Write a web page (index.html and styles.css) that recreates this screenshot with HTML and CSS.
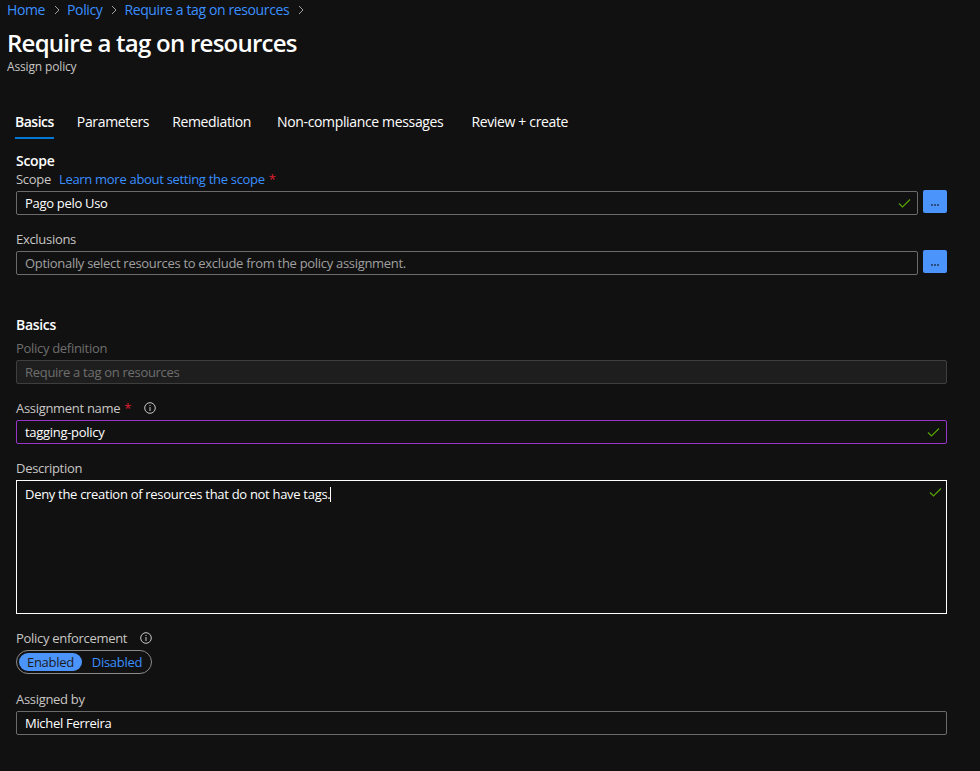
FILE: index.html
```
<!DOCTYPE html>
<html>
<head>
<meta charset="utf-8">
<link rel="stylesheet" href="styles.css">
</head>
<body>
<div class="header">
  <nav class="crumbs">
    <a>Home</a><svg class="sep" viewBox="0 0 6 10" width="6" height="10"><path d="M1 1 L5 5 L1 9" fill="none" stroke="#a0a0a0" stroke-width="1"/></svg><a>Policy</a><svg class="sep" viewBox="0 0 6 10" width="6" height="10"><path d="M1 1 L5 5 L1 9" fill="none" stroke="#a0a0a0" stroke-width="1"/></svg><a>Require a tag on resources</a><svg class="sep" viewBox="0 0 6 10" width="6" height="10"><path d="M1 1 L5 5 L1 9" fill="none" stroke="#a0a0a0" stroke-width="1"/></svg>
  </nav>
  <h1 class="title">Require a tag on resources</h1>
  <div class="subtitle">Assign policy</div>
</div>
<div class="tabs">
  <div class="tab active">Basics</div>
  <div class="tab">Parameters</div>
  <div class="tab">Remediation</div>
  <div class="tab wide">Non-compliance messages</div>
  <div class="tab wider">Review + create</div>
</div>
<form class="form">
  <h2 class="section">Scope</h2>
  <div class="field first">
    <div class="label">Scope <a class="link">Learn more about setting the scope</a> <span class="req">*</span></div>
    <div class="row">
      <div class="input">Pago pelo Uso<svg class="check" viewBox="0 0 12 9" width="13" height="9"><path d="M0.5 4.5 L4 8 L11.5 0.5" fill="none" stroke="#57a300" stroke-width="1.2"/></svg></div>
      <div class="dots"><i></i><i></i><i></i></div>
    </div>
  </div>
  <div class="field">
    <div class="label">Exclusions</div>
    <div class="row">
      <div class="input placeholder">Optionally select resources to exclude from the policy assignment.</div>
      <div class="dots"><i></i><i></i><i></i></div>
    </div>
  </div>

  <h2 class="section second">Basics</h2>
  <div class="field first lower">
    <div class="label disabled">Policy definition</div>
    <div class="input disabled">Require a tag on resources</div>
  </div>
  <div class="field">
    <div class="label">Assignment name <span class="req">*</span><svg class="info" viewBox="0 0 12 12" width="12" height="12"><circle cx="6" cy="6" r="5.3" fill="none" stroke="#c8c8c8" stroke-width="1"/><rect x="5.5" y="5" width="1" height="4" fill="#c8c8c8"/><rect x="5.5" y="3" width="1" height="1" fill="#c8c8c8"/></svg></div>
    <div class="input focus">tagging-policy<svg class="check" viewBox="0 0 12 9" width="13" height="9"><path d="M0.5 4.5 L4 8 L11.5 0.5" fill="none" stroke="#57a300" stroke-width="1.2"/></svg></div>
  </div>
  <div class="field">
    <div class="label">Description</div>
    <div class="textarea">Deny the creation of resources that do not have tags.<span class="caret"></span><svg class="check" viewBox="0 0 12 9" width="13" height="9"><path d="M0.5 4.5 L4 8 L11.5 0.5" fill="none" stroke="#57a300" stroke-width="1.2"/></svg></div>
  </div>
  <div class="field">
    <div class="label">Policy enforcement<svg class="info" viewBox="0 0 12 12" width="12" height="12"><circle cx="6" cy="6" r="5.3" fill="none" stroke="#c8c8c8" stroke-width="1"/><rect x="5.5" y="5" width="1" height="4" fill="#c8c8c8"/><rect x="5.5" y="3" width="1" height="1" fill="#c8c8c8"/></svg></div>
    <div class="toggle"><span class="opt on">Enabled</span><span class="opt">Disabled</span></div>
  </div>
  <div class="field last">
    <div class="label">Assigned by</div>
    <div class="input">Michel Ferreira</div>
  </div>
</form>
</body>
</html>
```
FILE: styles.css
```
* { box-sizing: border-box; }
html, body { margin: 0; padding: 0; }
body {
  background: #111111;
  color: #ffffff;
  font-family: "Open Sans", "Noto Sans", sans-serif;
  font-size: 13px;
  letter-spacing: -0.3px;
  width: 980px;
  height: 771px;
  overflow: hidden;
}
.header { padding-left: 7px; }
.crumbs {
  font-size: 14px;
  letter-spacing: -0.38px;
  line-height: 20px;
  height: 20px;
  display: flex;
  align-items: center;
}
.crumbs a { color: #3a8fff; }
.crumbs .sep { margin: 0 7px 0 9px; }
.title {
  margin: 7px 0 0;
  font-size: 24px;
  letter-spacing: -0.75px;
  line-height: 32px;
  font-weight: 600;
}
.subtitle {
  font-size: 12px;
  letter-spacing: -0.15px;
  line-height: 16px;
  color: #c8c6c4;
}
.tabs {
  display: flex;
  gap: 23px;
  margin-top: 37px;
  padding-left: 15px;
}
.tab {
  font-size: 14px;
  letter-spacing: -0.35px;
  line-height: 20px;
  padding-bottom: 5px;
  border-bottom: 2px solid transparent;
}
.tab.wide { margin-left: 3px; }
.tab.wider { margin-left: 5px; }
.tab.active { border-bottom-color: #0078d4; font-weight: 600; letter-spacing: -0.5px; }
.form {
  padding-left: 16px;
  width: 947px;
  margin: 0;
}
.section {
  margin: 12px 0 0;
  font-size: 14px;
  letter-spacing: -0.3px;
  line-height: 20px;
  font-weight: 600;
}
.section.second { margin-top: 40px; }
.field { margin-top: 15px; }
.field.first { margin-top: -1px; }
.field.first.lower { margin-top: 4px; }
.field.last { margin-top: 16px; }
.label {
  line-height: 18px;
  color: #c8c6c4;
  margin-bottom: 3px;
  display: flex;
  align-items: center;
  gap: 4px;
}
.label.disabled { color: #6e6e6e; }
.link { color: #3a8fff; margin-left: 4px; }
.req { color: #e01e2e; }
.info { margin-left: 9px; }
.row { display: flex; align-items: flex-start; gap: 5px; }
.row .input { flex: 1; }
.input {
  height: 24px;
  border: 1px solid #6b6b6b;
  border-radius: 2px;
  padding: 0 8px;
  line-height: 22px;
  display: flex;
  align-items: center;
  justify-content: space-between;
  color: #ffffff;
}
.input.placeholder { color: #a0a0a0; }
.input.disabled { background: #1e1e1e; border-color: #3e3e3e; color: #6e6e6e; }
.input.focus { border-color: #9a34c9; }
.check { margin-right: -2px; }
.dots {
  width: 24px;
  height: 23px;
  margin-top: -1px;
  background: #4b94fc;
  border-radius: 2px;
  display: flex;
  justify-content: center;
  align-items: flex-end;
  gap: 1px;
  padding-bottom: 7px;
}
.dots i { width: 2px; height: 2px; background: #2b4f80; display: block; }
.textarea {
  height: 134px;
  border: 1px solid #ffffff;
  padding: 3px 8px;
  line-height: 20px;
  position: relative;
}
.textarea .check { position: absolute; right: 6px; top: 7px; }
.caret { display: inline-block; width: 1px; height: 15px; background: #fff; vertical-align: -3px; }
.toggle {
  width: 136px;
  height: 24px;
  border: 1px solid #8a8a8a;
  border-radius: 12px;
  display: flex;
  align-items: center;
  padding: 0 2px;
  gap: 2px;
}
.opt { color: #3a8fff; line-height: 18px; padding: 0 8px; border-radius: 9px; }
.opt.on { background: #4b94fc; color: #1b1b1b; }
```
